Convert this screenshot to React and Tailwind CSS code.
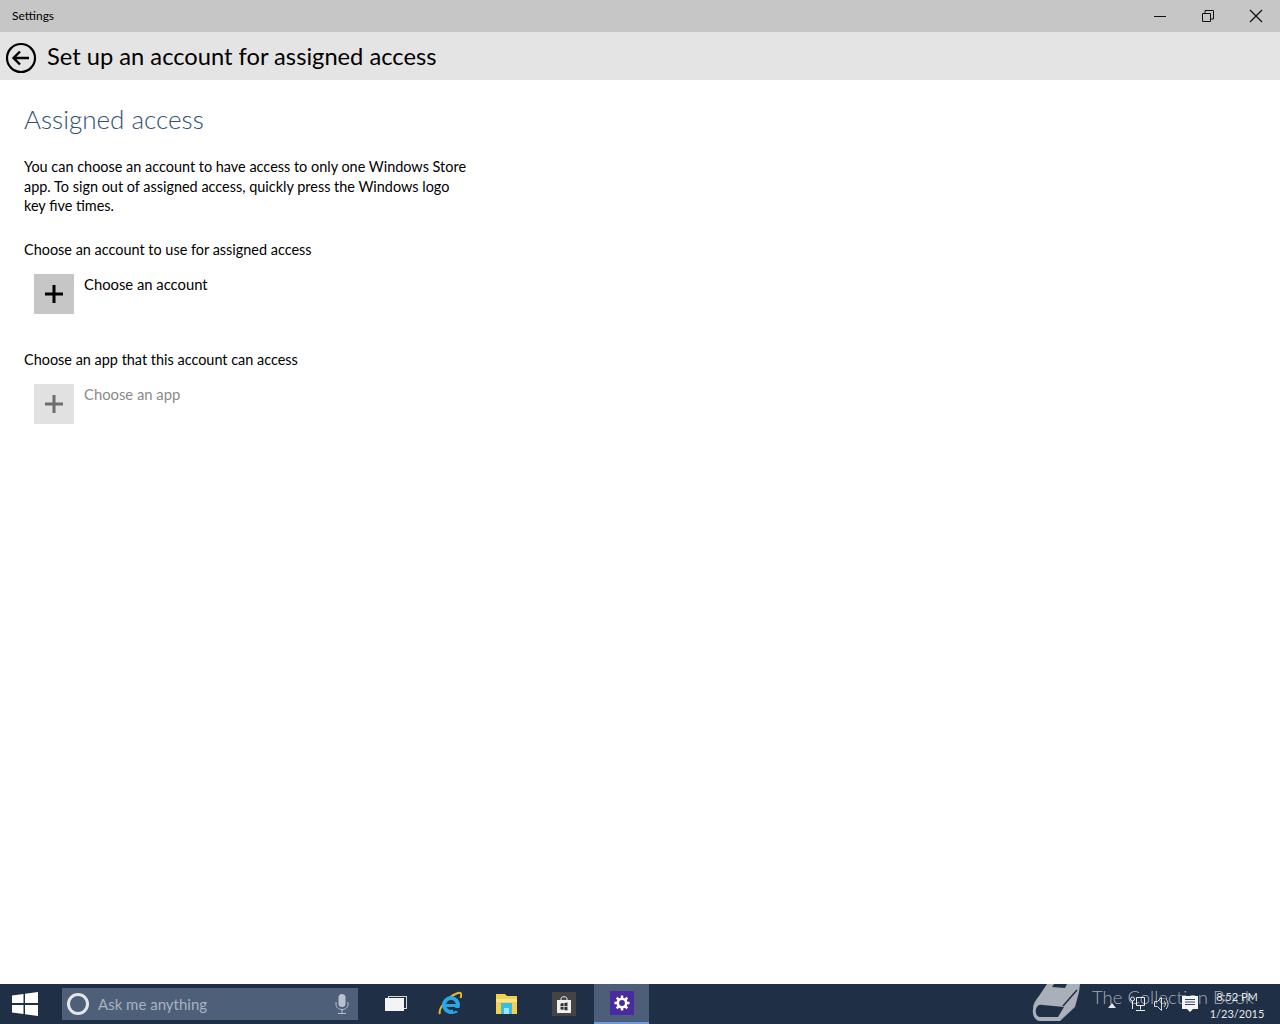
const font = "font-['Lato','Liberation_Sans',sans-serif]";

const AddRow = ({ label, disabled }) => (
  <div className="flex items-start gap-[10px] pl-[10px]">
    <div className={`flex h-10 w-10 items-center justify-center ${disabled ? "bg-[#e1e1e1]" : "bg-[#c6c6c6]"}`}>
      <svg width="20" height="20" viewBox="0 0 20 20">
        <path d="M10 1v18M1 10h18" stroke={disabled ? "#6d6d6d" : "#000"} strokeWidth="3" fill="none" />
      </svg>
    </div>
    <p className={`text-[14.800px] leading-[20px] ${disabled ? "text-[#8a8a8a]" : "text-black"}`}>{label}</p>
  </div>
);

const StartIcon = () => (
  <svg width="28" height="26" viewBox="0 0 28 26">
    <path d="M1 4.500 12.500 3v9H1zM14 2.800 27 1v11H14zM1 14h11.500v9L1 21.500zM14 14h13v11l-13-1.800z" fill="#fff" />
  </svg>
);

const MicIcon = () => (
  <svg width="14" height="22" viewBox="0 0 14 22">
    <rect x="3.500" y="1" width="7" height="13" rx="3.500" fill="#b9c1cc" />
    <path d="M1 9v2c0 3.500 2.500 5.500 6 5.500s6-2 6-5.500V9M7 16.500V20M3 20.500h8" fill="none" stroke="#b9c1cc" />
  </svg>
);

const TaskViewIcon = () => (
  <svg width="22" height="16" viewBox="0 0 22 16">
    <rect x="3.500" y="0.500" width="18" height="12" fill="#1f2f46" stroke="#d8d8d8" />
    <rect x="0" y="2" width="19" height="13" fill="#f4f4f4" />
  </svg>
);

const IeIcon = () => (
  <svg width="24" height="26" viewBox="0 0 24 26">
    <path d="M2 23C0 19 8 6 20 2c3-1 4 1 2.500 5" fill="none" stroke="#e8b92f" strokeWidth="2" />
    <circle cx="13" cy="14" r="7" fill="none" stroke="#2ba5e3" strokeWidth="4" />
    <path d="M8 13h11v3H8z" fill="#2ba5e3" />
    <path d="M15 17h7v4h-7z" fill="#1f2f46" />
    <path d="M9 18c2 3 6 3.500 9 1.500l2 1.500c-3 2-9 2.500-11.500-.5z" fill="#2ba5e3" />
  </svg>
);

const FolderIcon = () => (
  <svg width="22" height="20" viewBox="0 0 22 20">
    <path d="M0 0h9l2 2h10v18H0z" fill="#f6cf4f" />
    <path d="M0 5h21v3H0z" fill="#fbe48a" />
    <path d="M5 9h11v11H5z" fill="#35bfe6" />
    <path d="M8 14h5v6H8z" fill="#9be6f7" />
  </svg>
);

const StoreIcon = () => (
  <div className="flex h-6 w-6 items-center justify-center bg-[#444]">
    <svg width="14" height="17" viewBox="0 0 14 17">
      <path d="M4 4V2.500C4 1.500 5 .8 7 .8s3 .7 3 1.700V4" fill="none" stroke="#eee" />
      <path d="M0 4h14v13H0z" fill="#eee" />
      <path d="M3.500 7.500 6.600 7v3H3.500zM7.400 6.900l3.100-.4V10H7.400zM3.500 10.800h3.100v3l-3.100-.4zM7.400 10.800h3.100v3.600l-3.100-.5z" fill="#333" />
    </svg>
  </div>
);

const GearIcon = () => (
  <div className="flex h-6 w-6 items-center justify-center bg-[#4a2aa0]">
    <svg width="16" height="16" viewBox="0 0 16 16">
      <circle cx="8" cy="8" r="4.200" fill="none" stroke="#fff" strokeWidth="2.600" />
      <path d="M8 .5v3M8 12.500v3M.5 8h3M12.500 8h3M2.700 2.700l2.100 2.100M11.200 11.200l2.100 2.100M13.300 2.700l-2.100 2.100M4.800 11.200l-2.100 2.100" stroke="#fff" strokeWidth="2.400" />
    </svg>
  </div>
);

const Tray = () => (
  <div className="relative flex items-center">
    <svg width="8" height="5" viewBox="0 0 8 5" className="mr-[13px] mt-[2px]"><path d="M0 5 4 0l4 5z" fill="#e6e6e6" /></svg>
    <svg width="18" height="18" viewBox="0 0 18 18" className="mr-[6px]">
      <circle cx="3.500" cy="4" r="2" fill="none" stroke="#eee" />
      <path d="M7.500 2.500h8v8h-8zM11.500 10.500v4M7 15.500h9M3.500 6v8" fill="none" stroke="#eee" />
    </svg>
    <svg width="18" height="18" viewBox="0 0 18 18" className="mr-[10px]">
      <path d="M1.500 6.500h3l4-4v13l-4-4h-3z" fill="none" stroke="#ddd" />
      <path d="M11 6a4 4 0 0 1 0 6M13 4a7 7 0 0 1 0 10" fill="none" stroke="#ddd" />
    </svg>
    <svg width="18" height="18" viewBox="0 0 18 18">
      <path d="M1 1h16v13h-5l-3 3-3-3H1z" fill="#f4f4f4" />
      <path d="M4 4.500h10M4 7h10M4 9.500h10" stroke="#33465f" />
    </svg>
  </div>
);

const App = () => {
  return (
    <div className={`flex h-[1024px] flex-col overflow-hidden bg-white ${font}`}>
      <div className="flex h-8 shrink-0 items-center justify-between bg-[#c6c6c6] pl-3">
        <span className="text-xs text-black">Settings</span>
        <div className="flex">
          <div className="flex h-8 w-12 items-center justify-center">
            <svg width="12" height="12" viewBox="0 0 12 12"><path d="M0 6.500h12" stroke="#111" /></svg>
          </div>
          <div className="flex h-8 w-12 items-center justify-center">
            <svg width="12" height="12" viewBox="0 0 12 12"><path d="M.5 3.500h8v8h-8zM3 3V.5h8.500V9H9" fill="none" stroke="#111" /></svg>
          </div>
          <div className="flex h-8 w-12 items-center justify-center">
            <svg width="14" height="14" viewBox="0 0 14 14"><path d="m1 1 12 12M13 1 1 13" stroke="#111" strokeWidth="1.300" /></svg>
          </div>
        </div>
      </div>

      <div className="flex h-12 shrink-0 items-center gap-[10px] bg-[#e4e4e4] pl-[5px]">
        <svg width="32" height="32" viewBox="0 0 32 32" className="mt-[3px]">
          <circle cx="16" cy="16" r="14" fill="none" stroke="#000" strokeWidth="2.200" />
          <path d="M24 16H9M15 9.500 8.500 16l6.500 6.500" fill="none" stroke="#000" strokeWidth="2.400" />
        </svg>
        <h1 className="mt-[1px] text-[23.700px] font-normal text-black">Set up an account for assigned access</h1>
      </div>

      <main className="flex-1 px-6 pt-[22px]">
        <h2 className="text-[26px] font-light leading-[34px] text-[#2f5073]">Assigned access</h2>
        <p className="mt-[21px] w-[450px] text-[14.450px] leading-[19.500px] text-black">
          You can choose an account to have access to only one Windows Store app. To sign out of assigned access, quickly press the Windows logo key five times.
        </p>
        <p className="mt-[24px] text-[14.450px] leading-5 text-black">Choose an account to use for assigned access</p>
        <div className="mt-[14px]">
          <AddRow label="Choose an account" />
        </div>
        <p className="mt-[36px] text-[14.450px] leading-5 text-black">Choose an app that this account can access</p>
        <div className="mt-[14px]">
          <AddRow label="Choose an app" disabled />
        </div>
      </main>

      <footer className="relative flex h-10 shrink-0 items-center overflow-hidden bg-[#1f2f46]">
        <div className="flex w-[62px] justify-center pr-[12px]">
          <StartIcon />
        </div>
        <div className="flex h-8 w-[296px] items-center bg-[#4e6079] pl-[5px] pr-[9px]">
          <span className="h-[22px] w-[22px] rounded-full border-[3px] border-[#e6e6e6]" />
          <span className="ml-[9px] flex-1 text-[15px] text-[#a8b2c0]">Ask me anything</span>
          <MicIcon />
        </div>
        <div className="ml-[9px] flex items-center">
          <div className="flex h-10 w-[58px] items-center justify-center"><TaskViewIcon /></div>
          <div className="flex h-10 w-[50px] items-center justify-center"><IeIcon /></div>
          <div className="flex h-10 w-[64px] items-center justify-center"><FolderIcon /></div>
          <div className="flex h-10 w-[50px] items-center justify-center"><StoreIcon /></div>
          <div className="ml-[5px] flex h-10 w-[55px] items-center justify-center border-b-2 border-[#6f9bd8] bg-[#4d5f78]"><GearIcon /></div>
        </div>
        <div className="pointer-events-none absolute -top-[2px] left-[1025px] flex items-start text-[#a3abb7]">
          <svg width="70" height="42" viewBox="0 0 70 42">
            <path d="M22 2H55L54 10 50 25 35 39H15C10 39 7 33 8 27 8 22 10 19 14 14Z" fill="#a9b0ba" />
            <path d="M11 27C12 23 15 22 18 23L39 25 33 35H15C12 35 10 31 11 27Z" fill="#1f2f46" />
            <path d="M29 2H42L40 6 27 5Z" fill="#1f2f46" />
            <path d="M38 24 52 8" stroke="#1f2f46" strokeWidth="1.500" />
          </svg>
          <span className="-ml-[3px] mt-[2px] text-[18.500px] font-light">The Collection Book</span>
        </div>
        <div className="ml-auto flex items-center pr-[10px]">
          <Tray />
          <div className="relative ml-[5px] mt-[2px] w-[66px] text-center text-[11px] leading-[17px] text-[#e8e8e8]">
            <div>8:52 PM</div>
            <div>1/23/2015</div>
          </div>
        </div>
      </footer>
    </div>
  );
};

export default App;
